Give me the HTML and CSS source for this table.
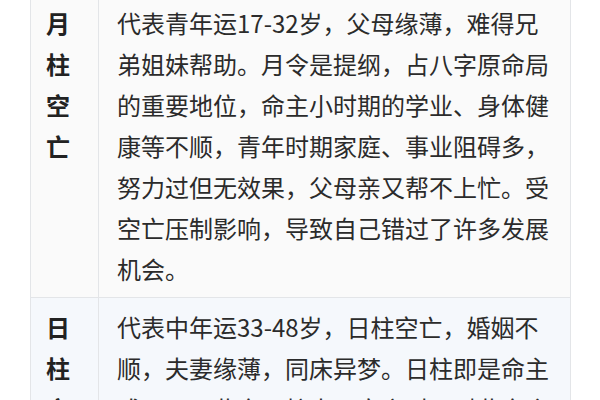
FILE: index.html
```html
<!DOCTYPE html>
<html lang="zh-CN">
<head>
<meta charset="utf-8">
<link rel="stylesheet" href="styles.css">
</head>
<body>
<table class="kw-table">
  <colgroup><col class="col-name"><col class="col-desc"></colgroup>
  <tbody>
    <tr class="row-odd">
      <th class="name">月柱空亡</th>
      <td class="desc">代表青年运17-32岁，父母缘薄，难得兄弟姐妹帮助。月令是提纲，占八字原命局的重要地位，命主小时期的学业、身体健康等不顺，青年时期家庭、事业阻碍多，努力过但无效果，父母亲又帮不上忙。受空亡压制影响，导致自己错过了许多发展机会。</td>
    </tr>
    <tr class="row-even">
      <th class="name">日柱空亡</th>
      <td class="desc">代表中年运33-48岁，日柱空亡，婚姻不顺，夫妻缘薄，同床异梦。日柱即是命主或日元，此宫日柱出现空亡时，对此宫会造成很大的影响。</td>
    </tr>
  </tbody>
</table>
</body>
</html>
```

FILE: styles.css
```css
html, body {
  margin: 0;
  padding: 0;
  background: #ffffff;
}
body {
  font-family: "Noto Sans CJK SC", "Noto Sans", sans-serif;
  color: #2b2b2b;
  overflow: hidden;
}
.kw-table {
  margin: -7px 0 0 30px;
  width: 541px;
  border-collapse: collapse;
  table-layout: fixed;
  font-size: 24px;
  line-height: 41px;
}
.col-name { width: 68px; }
.kw-table th,
.kw-table td {
  border: 1px solid #e3e5e8;
  vertical-align: top;
  padding: 8px 0;
}
.name {
  font-weight: 700;
  color: #222222;
  text-align: left;
  padding: 8px 28px 8px 15px !important;
  word-break: break-all;
}
.desc {
  padding: 8px 17px 8px 18px !important;
  text-align: left;
}
.row-odd th, .row-odd td { background: #fafafa; }
.row-even th, .row-even td { background: #f5f8fc; }
```
